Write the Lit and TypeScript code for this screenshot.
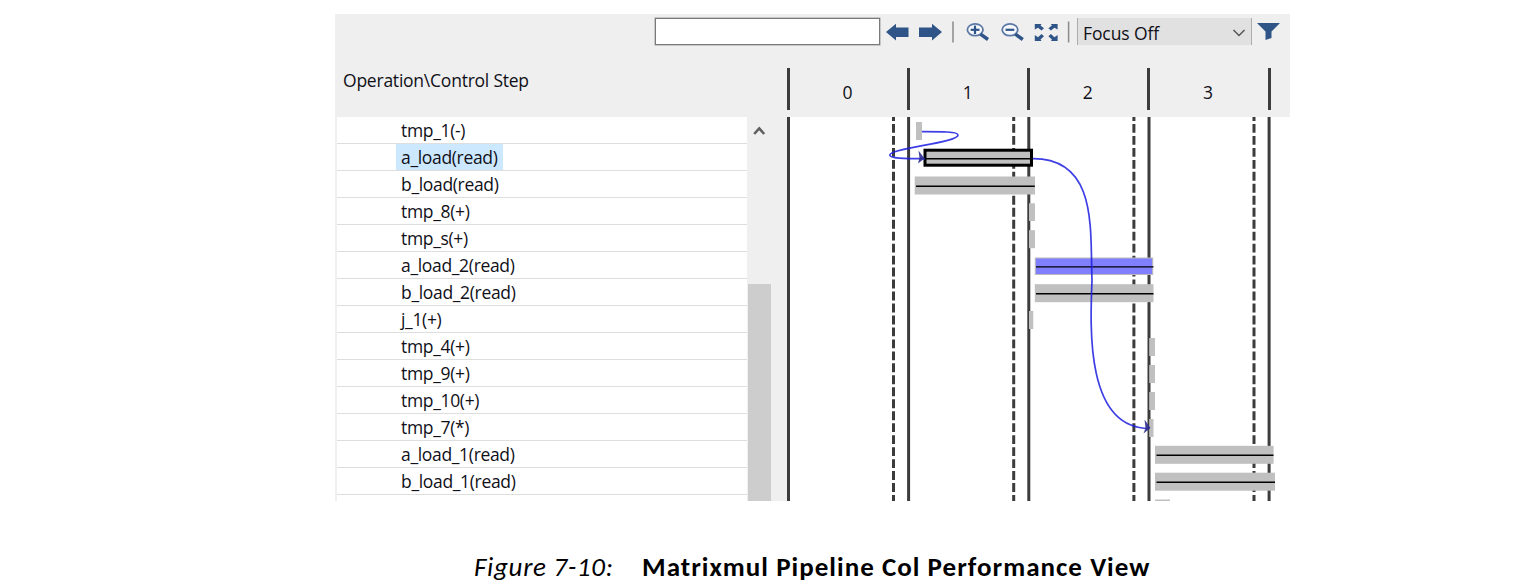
import { LitElement, html, css, svg } from "lit";
import { customElement } from "lit/decorators.js";

const OPERATIONS = [
  "tmp_1(-)", "a_load(read)", "b_load(read)", "tmp_8(+)", "tmp_s(+)",
  "a_load_2(read)", "b_load_2(read)", "j_1(+)", "tmp_4(+)", "tmp_9(+)",
  "tmp_10(+)", "tmp_7(*)", "a_load_1(read)", "b_load_1(read)",
];
const SELECTED = "a_load(read)";

@customElement("view-toolbar")
class ViewToolbar extends LitElement {
  static styles = css`
    :host { display: flex; height: 36px; padding: 4px 9px 0 320px; box-sizing: border-box; align-items: flex-start; }
    .search { width: 225px; height: 27px; box-sizing: border-box; border: 1px solid #7a7a7a; box-shadow: 0 0 0 0.5px #a0a0a0; background: #fff; }
    .icons { width: 197px; height: 28px; flex: none; }
    .select { width: 175px; height: 27px; box-sizing: border-box; display: flex; align-items: center; justify-content: space-between;
      background: #e1e1e1; border: solid #acacac; border-width: 0 1px; padding: 2px 5px 0 5px; font-size: 17.5px; letter-spacing: -0.1px; }
    .chev { width: 14px; height: 10px; }
    .filter { width: 24px; height: 18px; margin: 5px 0 0 5px; }
  `;
  render() {
    return html`
      <div class="search"></div>
      <svg class="icons" viewBox="880 18 197 28">
        <g fill="#2f5487">
          <path d="M886 32L896 23.7V27.5H908.5V37H896V40.5Z" />
          <path d="M942 32L932 23.7V27.5H919V37H932V40.5Z" />
          <path d="M1034.8 24H1041.5L1040.5 25.5L1044 28.3L1041.5 30.5L1038 27.8L1034.8 29.5Z" />
          <path d="M1057.6 24H1050.9L1051.9 25.5L1048.4 28.3L1050.9 30.5L1054.4 27.8L1057.6 29.5Z" />
          <path d="M1034.8 41H1041.5L1040.5 39.5L1044 36.2L1041.5 34L1038 37.2L1034.8 35Z" />
          <path d="M1057.6 41H1050.9L1051.9 39.5L1048.4 36.2L1050.9 34L1054.4 37.2L1057.6 35Z" />
        </g>
        <g stroke="#8b8b8b" stroke-width="1.5"><path d="M953 21.5V42.5M1068.6 21.5V42.5" /></g>
        ${[0, 34.8].map((dx) => svg`
          <g transform="translate(${dx} 0)" fill="none" stroke="#2f5487">
            <ellipse cx="975.2" cy="29.8" rx="7.8" ry="5.9" fill="#f8f9fc" stroke-width="1.8" stroke="#5b78a5" />
            <path d="M980.5 34.2L988 39.5" stroke-width="3.4" />
            <path d="M970.7 29.8H979.5" stroke-width="2.2" />
            ${dx === 0 ? svg`<path d="M975 25.6V34" stroke-width="2.2" />` : ""}
          </g>`)}
      </svg>
      <div class="select"><span>Focus Off</span>
        <svg class="chev" viewBox="0 0 14 10"><path d="M1.5 2L7 7.5L12.5 2" fill="none" stroke="#555" stroke-width="1.5" /></svg>
      </div>
      <svg class="filter" viewBox="0 0 24 18"><path d="M0 0H23L14.5 8.5V15L8.5 17V8.5Z" fill="#2f5487" /></svg>
    `;
  }
}

@customElement("operation-list")
class OperationList extends LitElement {
  static styles = css`
    :host { display: flex; width: 452px; height: 384px; overflow: hidden; background: #efefef; }
    .rows { width: 410px; margin-left: 2px; background: #fff; }
    .row { height: 26.97px; box-sizing: border-box; border-bottom: 1px solid #dedede; padding-left: 59px; display: flex; }
    .label { padding: 0 5px 0 5px; font-size: 17.5px; line-height: 27px; letter-spacing: -0.33px; white-space: pre; height: 26px; }
    .selected { background: #cce8ff; }
    .scroll { width: 23px; margin-left: 1px; display: flex; flex-direction: column; justify-content: space-between; }
    .up { width: 13px; height: 10px; margin: 9px 0 0 5px; }
    .thumb { height: 217px; background: #cdcdcd; }
  `;
  render() {
    return html`
      <div class="rows">
        ${OPERATIONS.map((n) => html`<div class="row"><span class="label ${n === SELECTED ? "selected" : ""}">${n}</span></div>`)}
      </div>
      <div class="scroll">
        <svg class="up" viewBox="0 0 13 10"><path d="M1.2 8L6.2 2.5L11.2 8" fill="none" stroke="#606060" stroke-width="2.6" /></svg>
        <div class="thumb"></div>
      </div>`;
  }
}

const STEP_LINES = [788.5, 908.6, 1028.8, 1149, 1269.1];
const DASHED = [893.5, 1013.7, 1133.9, 1254];
/* x, y, width, height of each operation bar */
const BARS = [
  [916, 122, 6, 18], [914.7, 176.5, 120.3, 18], [1029, 203.3, 6, 17.7], [1029, 230.2, 6, 18],
  [1034.8, 284.2, 118.7, 18], [1029, 311, 4.3, 18], [1149.2, 338, 5.8, 18], [1149.2, 365, 5.8, 18],
  [1149.2, 392, 5.8, 18], [1149.2, 419, 4.3, 18], [1155, 445.8, 118.6, 18], [1155, 472.7, 120, 18], [1155, 499.5, 15, 2],
];

@customElement("schedule-chart")
class ScheduleChart extends LitElement {
  static styles = css`
    :host { display: block; width: 503px; height: 384px; background: #fff; }
    .canvas { display: block; width: 503px; height: 384px; }
  `;
  render() {
    return html`<svg class="canvas" viewBox="787 117 503 384">
      <g stroke="#3c3c3c" stroke-width="3">
        ${STEP_LINES.map((x) => svg`<path d="M${x} 117V501" />`)}
        ${DASHED.map((x) => svg`<path d="M${x} 117V501" stroke-dasharray="8.9 3.07" stroke-dashoffset="5" />`)}
      </g>
      <g fill="#c0c0c0">${BARS.map(([x, y, w, h]) => svg`<rect x=${x} y=${y} width=${w} height=${h} />`)}</g>
      <rect x="1035.3" y="258" width="117.4" height="16.5" fill="#8080ff" stroke="#bababa" />
      <rect x="925" y="150.2" width="106.5" height="15" fill="#c0c0c0" stroke="#000" stroke-width="3" />
      <g stroke="#000" stroke-width="1.4">
        <path d="M926 158.7H1031M916 186.3H1034.8M1036 266.9H1153.5M1036 293.7H1153.5M1156.5 455.3H1273.5M1156.5 482.3H1275" />
      </g>
      <g fill="none" stroke="#1c1ce0" stroke-width="1.7" stroke-opacity=".85">
        <path d="M922 131.6C940 131.6 958 131.5 958 135C958 143 890 148 889.8 155C889.8 158.5 903 158.7 925 158.7" />
        <path d="M1033 158.7C1098 158.7 1090 230 1092 280C1090 330 1086 428 1149 428.5" />
      </g>
      <g fill="#2e2e8f" fill-opacity=".9"><path d="M918.5 150.5L924.5 158.5L918 163.5L919.5 158Z" /><path d="M1144.5 419.5L1150.5 428L1143.5 433.5L1145.5 428Z" /></g>
    </svg>`;
  }
}

@customElement("app-root")
class AppRoot extends LitElement {
  static styles = css`
    :host { display: block; width: 1530px; height: 588px; box-sizing: border-box; padding-top: 14px; background: #fff; color: #101018;
      font-family: "Open Sans", "Noto Sans", sans-serif; overflow: hidden; }
    .panel { width: 955px; height: 487px; margin-left: 335px; background: #efefef; }
    .head { display: flex; height: 67px; }
    .title { width: 444px; padding: 18px 0 0 8px; font-size: 17.5px; line-height: 24px; letter-spacing: -0.23px; }
    .steps { display: flex; height: 42px; margin-top: 18px; }
    .step { width: 120.15px; box-sizing: border-box; border-left: 3px solid #3c3c3c; text-align: center; font-size: 17.5px; line-height: 49px; padding-right: 2px; }
    .end { width: 3px; background: #3c3c3c; }
    .body { display: flex; }
    .caption { display: flex; padding: 51px 0 0 474px; font-family: Carlito, Calibri, Lato, sans-serif; font-size: 27px; line-height: 30px; color: #000; white-space: pre; }
    .number { width: 168px; font-style: italic; letter-spacing: 0.7px; }
    .name { font-weight: 700; letter-spacing: 1.03px; }
  `;
  render() {
    return html`
      <div class="panel">
        <view-toolbar></view-toolbar>
        <div class="head">
          <div class="title">Operation\\Control Step</div>
          <div class="steps">${[0, 1, 2, 3].map((n) => html`<div class="step">${n}</div>`)}<div class="end"></div></div>
        </div>
        <div class="body"><operation-list></operation-list><schedule-chart></schedule-chart></div>
      </div>
      <div class="caption"><span class="number">Figure 7-10:</span><span class="name">Matrixmul Pipeline Col Performance View</span></div>
    `;
  }
}
